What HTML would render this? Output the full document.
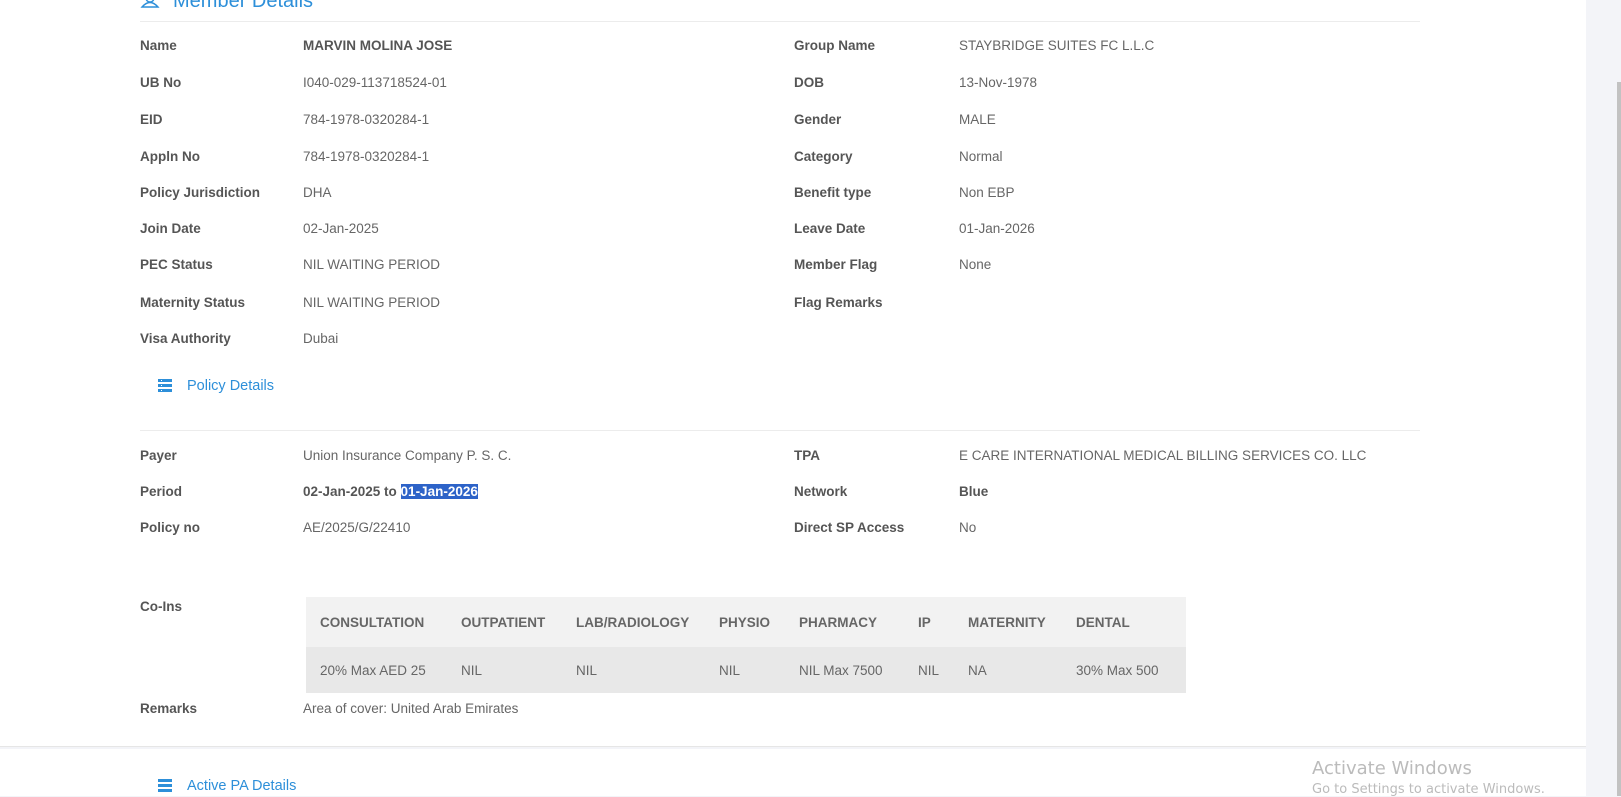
<!DOCTYPE html>
<html><head><meta charset="utf-8"><style>
body{margin:0;width:1621px;height:796px;overflow:hidden;background:#f3f4f8;font-family:"Liberation Sans",sans-serif;font-size:13.5px;position:relative}
.card{position:absolute;left:0;width:1586px;background:#fff}
.t{position:absolute;white-space:nowrap;line-height:16px}
.l{font-weight:bold;color:#555}
.v{color:#666}
.b{font-weight:bold;color:#555}
.hr{position:absolute;left:140px;width:1280px;height:1px;background:#ececec}
.blue{color:#2d8fd9;position:absolute;white-space:nowrap}
table{position:absolute;left:306px;top:597px;width:880px;border-collapse:collapse;color:#666;font-size:13.5px}
th{background:#f2f2f2;height:50px;text-align:left;font-weight:bold;color:#666;padding:0 0 0 14px}
td{background:#e8e8e8;height:46px;padding:0 0 0 14px}
</style></head><body>
<div class="card" style="top:0;height:746px;border-bottom:1px solid #e6e6e6"></div>
<div class="card" style="top:749px;height:47px;"></div>
<div style="position:absolute;left:1617px;top:82px;width:4px;height:714px;background:#c2c2c2"></div>
<svg style="position:absolute;left:140px;top:-6px" width="20" height="14" viewBox="0 0 20 14"><circle cx="10" cy="4" r="4" fill="none" stroke="#2d8fd9" stroke-width="1.4"/><path d="M2 13 Q10 4 18 13 Z" fill="none" stroke="#2d8fd9" stroke-width="1.4"/></svg>
<div class="blue" style="left:173px;top:-10px;font-size:20px">Member Details</div>
<div class="hr" style="top:21px"></div>

<div class="t l" style="left:140px;top:38px">Name</div><div class="t b" style="left:303px;top:38px">MARVIN MOLINA JOSE</div>
<div class="t l" style="left:140px;top:75px">UB No</div><div class="t v" style="left:303px;top:75px">I040-029-113718524-01</div>
<div class="t l" style="left:140px;top:112px">EID</div><div class="t v" style="left:303px;top:112px">784-1978-0320284-1</div>
<div class="t l" style="left:140px;top:149px">Appln No</div><div class="t v" style="left:303px;top:149px">784-1978-0320284-1</div>
<div class="t l" style="left:140px;top:185px">Policy Jurisdiction</div><div class="t v" style="left:303px;top:185px">DHA</div>
<div class="t l" style="left:140px;top:221px">Join Date</div><div class="t v" style="left:303px;top:221px">02-Jan-2025</div>
<div class="t l" style="left:140px;top:257px">PEC Status</div><div class="t v" style="left:303px;top:257px">NIL WAITING PERIOD</div>
<div class="t l" style="left:140px;top:295px">Maternity Status</div><div class="t v" style="left:303px;top:295px">NIL WAITING PERIOD</div>
<div class="t l" style="left:140px;top:331px">Visa Authority</div><div class="t v" style="left:303px;top:331px">Dubai</div>

<div class="t l" style="left:794px;top:38px">Group Name</div><div class="t v" style="left:959px;top:38px">STAYBRIDGE SUITES FC L.L.C</div>
<div class="t l" style="left:794px;top:75px">DOB</div><div class="t v" style="left:959px;top:75px">13-Nov-1978</div>
<div class="t l" style="left:794px;top:112px">Gender</div><div class="t v" style="left:959px;top:112px">MALE</div>
<div class="t l" style="left:794px;top:149px">Category</div><div class="t v" style="left:959px;top:149px">Normal</div>
<div class="t l" style="left:794px;top:185px">Benefit type</div><div class="t v" style="left:959px;top:185px">Non EBP</div>
<div class="t l" style="left:794px;top:221px">Leave Date</div><div class="t v" style="left:959px;top:221px">01-Jan-2026</div>
<div class="t l" style="left:794px;top:257px">Member Flag</div><div class="t v" style="left:959px;top:257px">None</div>
<div class="t l" style="left:794px;top:295px">Flag Remarks</div>

<svg style="position:absolute;left:158px;top:379px" width="14" height="14" viewBox="0 0 14 14" fill="#2d8fd9"><rect x="0" y="0" width="14" height="3"/><rect x="0" y="5" width="14" height="3"/><rect x="0" y="10" width="14" height="3"/><rect x="3" y="1" width="1" height="1" fill="#fff"/><rect x="3" y="6" width="1" height="1" fill="#fff"/><rect x="3" y="11" width="1" height="1" fill="#fff"/></svg>
<div class="blue" style="left:187px;top:378px;font-size:14.5px">Policy Details</div>
<div class="hr" style="top:430px"></div>

<div class="t l" style="left:140px;top:448px">Payer</div><div class="t v" style="left:303px;top:448px">Union Insurance Company P. S. C.</div>
<div class="t l" style="left:140px;top:484px">Period</div><div class="t b" style="left:303px;top:484px">02-Jan-2025 to <span style="background:#2d63c8;color:#fff">01-Jan-2026</span></div>
<div class="t l" style="left:140px;top:520px">Policy no</div><div class="t v" style="left:303px;top:520px">AE/2025/G/22410</div>
<div class="t l" style="left:794px;top:448px">TPA</div><div class="t v" style="left:959px;top:448px">E CARE INTERNATIONAL MEDICAL BILLING SERVICES CO. LLC</div>
<div class="t l" style="left:794px;top:484px">Network</div><div class="t b" style="left:959px;top:484px">Blue</div>
<div class="t l" style="left:794px;top:520px">Direct SP Access</div><div class="t v" style="left:959px;top:520px">No</div>

<div class="t l" style="left:140px;top:599px">Co-Ins</div>
<table><tr><th style="width:127px">CONSULTATION</th><th style="width:101px">OUTPATIENT</th><th style="width:129px">LAB/RADIOLOGY</th><th style="width:66px">PHYSIO</th><th style="width:105px">PHARMACY</th><th style="width:36px">IP</th><th style="width:94px">MATERNITY</th><th>DENTAL</th></tr>
<tr><td>20% Max AED 25</td><td>NIL</td><td>NIL</td><td>NIL</td><td>NIL Max 7500</td><td>NIL</td><td>NA</td><td>30% Max 500</td></tr></table>
<div class="t l" style="left:140px;top:701px">Remarks</div><div class="t v" style="left:303px;top:701px">Area of cover: United Arab Emirates</div>

<svg style="position:absolute;left:158px;top:779px" width="14" height="14" viewBox="0 0 14 14" fill="#2d8fd9"><rect x="0" y="0" width="14" height="3"/><rect x="0" y="5" width="14" height="3"/><rect x="0" y="10" width="14" height="3"/></svg>
<div class="blue" style="left:187px;top:778px;font-size:14.5px">Active PA Details</div>
<div style="position:absolute;left:1312px;top:758px;color:#bbb;font-size:18px;font-family:'DejaVu Sans',sans-serif">Activate Windows</div>
<div style="position:absolute;left:1312px;top:782px;color:#bbb;font-size:13px;font-family:'DejaVu Sans',sans-serif">Go to Settings to activate Windows.</div>
</body></html>
